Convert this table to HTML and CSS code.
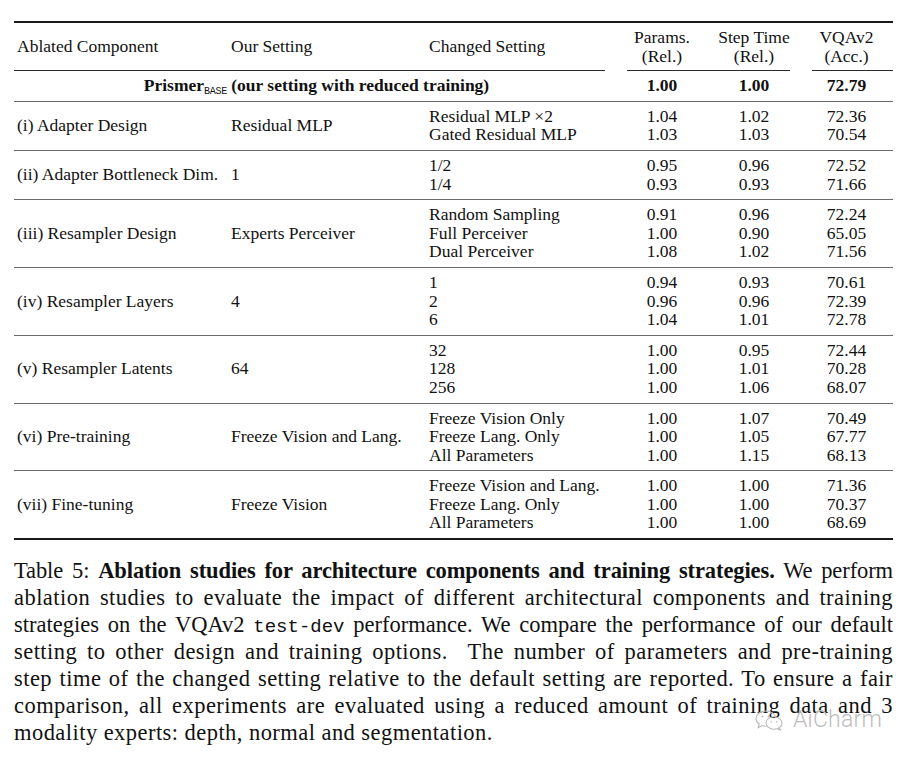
FILE: index.html
```html
<!DOCTYPE html>
<html lang="en">
<head>
<meta charset="utf-8">
<title>Table 5: Ablation studies</title>
<link rel="stylesheet" href="styles.css">
</head>
<body>
<div class="page">
  <table class="ablation">
    <colgroup>
      <col class="c1"><col class="c2"><col class="c3"><col class="c4"><col class="c5"><col class="c6">
    </colgroup>
    <thead>
      <tr class="head">
        <th>Ablated Component</th>
        <th>Our Setting</th>
        <th>Changed Setting</th>
        <th class="num">Params.<br>(Rel.)</th>
        <th class="num">Step Time<br>(Rel.)</th>
        <th class="num">VQAv2<br>(Acc.)</th>
      </tr>
      <tr class="cmid">
        <td colspan="3"><div class="rule rule-r"></div></td>
        <td colspan="2"><div class="rule rule-lr"></div></td>
        <td><div class="rule rule-l"></div></td>
      </tr>
    </thead>
    <tbody>
      <tr class="base">
        <td colspan="3" class="center">Prismer<sub class="sub">BASE</sub> (our setting with reduced training)</td>
        <td class="num">1.00</td>
        <td class="num">1.00</td>
        <td class="num">72.79</td>
      </tr>
      <tr class="group">
        <td>(i) Adapter Design</td>
        <td>Residual MLP</td>
        <td>Residual MLP ×2<br>Gated Residual MLP</td>
        <td class="num">1.04<br>1.03</td>
        <td class="num">1.02<br>1.03</td>
        <td class="num">72.36<br>70.54</td>
      </tr>
      <tr class="group">
        <td>(ii) Adapter Bottleneck Dim.</td>
        <td>1</td>
        <td>1/2<br>1/4</td>
        <td class="num">0.95<br>0.93</td>
        <td class="num">0.96<br>0.93</td>
        <td class="num">72.52<br>71.66</td>
      </tr>
      <tr class="group">
        <td>(iii) Resampler Design</td>
        <td>Experts Perceiver</td>
        <td>Random Sampling<br>Full Perceiver<br>Dual Perceiver</td>
        <td class="num">0.91<br>1.00<br>1.08</td>
        <td class="num">0.96<br>0.90<br>1.02</td>
        <td class="num">72.24<br>65.05<br>71.56</td>
      </tr>
      <tr class="group">
        <td>(iv) Resampler Layers</td>
        <td>4</td>
        <td>1<br>2<br>6</td>
        <td class="num">0.94<br>0.96<br>1.04</td>
        <td class="num">0.93<br>0.96<br>1.01</td>
        <td class="num">70.61<br>72.39<br>72.78</td>
      </tr>
      <tr class="group">
        <td>(v) Resampler Latents</td>
        <td>64</td>
        <td>32<br>128<br>256</td>
        <td class="num">1.00<br>1.00<br>1.00</td>
        <td class="num">0.95<br>1.01<br>1.06</td>
        <td class="num">72.44<br>70.28<br>68.07</td>
      </tr>
      <tr class="group">
        <td>(vi) Pre-training</td>
        <td>Freeze Vision and Lang.</td>
        <td>Freeze Vision Only<br>Freeze Lang. Only<br>All Parameters</td>
        <td class="num">1.00<br>1.00<br>1.00</td>
        <td class="num">1.07<br>1.05<br>1.15</td>
        <td class="num">70.49<br>67.77<br>68.13</td>
      </tr>
      <tr class="group">
        <td>(vii) Fine-tuning</td>
        <td>Freeze Vision</td>
        <td>Freeze Vision and Lang.<br>Freeze Lang. Only<br>All Parameters</td>
        <td class="num">1.00<br>1.00<br>1.00</td>
        <td class="num">1.00<br>1.00<br>1.00</td>
        <td class="num">71.36<br>70.37<br>68.69</td>
      </tr>
    </tbody>
  </table>

  <p class="caption">
    <span class="line first">Table 5: <b>Ablation studies for architecture components and training strategies.</b> We perform</span>
    <span class="line">ablation studies to evaluate the impact of different architectural components and training</span>
    <span class="line third">strategies on the VQAv2 <code class="tt">test-dev</code> performance. We compare the performance of our default</span>
    <span class="line">setting to other design and training options. &nbsp;The number of parameters and pre-training</span>
    <span class="line">step time of the changed setting relative to the default setting are reported. To ensure a fair</span>
    <span class="line">comparison, all experiments are evaluated using a reduced amount of training data and 3</span>
    <span class="line last">modality experts: depth, normal and segmentation.</span>
  </p>

  <div class="watermark">
    <svg class="wm-icon" width="32" height="22" viewBox="0 0 32 22">
      <path d="M12 2 C6 2 2 5.5 2 9.5 C2 11.8 3.3 13.8 5.3 15.2 L4.2 18.6 L8.2 16.6 C9.4 17 10.7 17.2 12 17.2" fill="none" stroke="#b9b9b9" stroke-width="1.1"/>
      <path d="M12 2 C17.5 2 21.6 5.2 21.9 9" fill="none" stroke="#b9b9b9" stroke-width="1.1"/>
      <ellipse cx="20" cy="14" rx="8" ry="6.2" fill="none" stroke="#b9b9b9" stroke-width="1.1"/>
      <path d="M25 18.8 L27 21.2 L23.4 19.8" fill="none" stroke="#b9b9b9" stroke-width="1.1"/>
      <circle cx="8.5" cy="7.5" r="0.9" fill="#b9b9b9"/>
      <circle cx="14.5" cy="7.5" r="0.9" fill="#b9b9b9"/>
      <circle cx="17.3" cy="12.8" r="0.8" fill="#b9b9b9"/>
      <circle cx="22.7" cy="12.8" r="0.8" fill="#b9b9b9"/>
    </svg>
    <span class="wm-text">AiCharm</span>
  </div>
</div>
</body>
</html>
```

FILE: styles.css
```css
html, body {
  margin: 0;
  padding: 0;
  background: #ffffff;
}

.page {
  position: relative;
  width: 879px;
  padding: 21px 16px 0 14px;
  color: #111111;
  font-family: "Liberation Serif", "Times New Roman", serif;
}

.ablation {
  width: 879px;
  table-layout: fixed;
  border-collapse: separate;
  border-spacing: 0;
  border-top: 2px solid #1a1a1a;
  border-bottom: 2px solid #1a1a1a;
  font-size: 17.5px;
  line-height: 18.6px;
}

.c1 { width: 214px; }
.c2 { width: 198px; }
.c3 { width: 190px; }
.c4 { width: 92px; }
.c5 { width: 92px; }
.c6 { width: 93px; }

.ablation th,
.ablation td {
  padding: 0 0 0 3px;
  text-align: left;
  vertical-align: middle;
  font-weight: normal;
  white-space: nowrap;
}

.ablation .num {
  text-align: center;
  padding-left: 0;
}

.ablation .center {
  text-align: center;
}

.head th {
  padding-top: 5px;
  padding-bottom: 5px;
}

.cmid td {
  padding: 0;
  height: 1px;
  line-height: 0;
  font-size: 0;
}

.rule {
  height: 1px;
  background: #2a2a2a;
}

.rule-r { margin-right: 11px; }
.rule-lr { margin-left: 11px; margin-right: 10px; }
.rule-l { margin-left: 12px; }

.base td {
  padding-top: 5px;
  padding-bottom: 6px;
  font-weight: bold;
}

.sub {
  font-family: "Liberation Mono", monospace;
  font-weight: normal;
  font-size: 10px;
  vertical-align: -3px;
  line-height: 0;
  letter-spacing: -0.3px;
}

.group td {
  border-top: 1px solid #6a6a6a;
  padding-top: 5px;
  padding-bottom: 6px;
}

.caption {
  margin: 17px 0 0 0;
  font-size: 22.5px;
  line-height: 27px;
  letter-spacing: 0.45px;
  color: #111111;
}

.caption .line {
  display: block;
  text-align: justify;
  text-align-last: justify;
  white-space: normal;
}

.caption .line.first {
  letter-spacing: -0.1px;
}

.caption .line.third {
  letter-spacing: 0;
}

.caption .line.last {
  text-align: left;
  text-align-last: left;
}

.caption b {
  font-weight: bold;
}

.tt {
  font-family: "Liberation Mono", "DejaVu Sans Mono", monospace;
  font-size: 19px;
  line-height: 0;
  letter-spacing: 0;
}

.watermark {
  position: absolute;
  left: 754px;
  top: 708px;
  display: flex;
  align-items: center;
  gap: 7px;
}

.wm-icon {
  display: block;
}

.wm-text {
  font-family: Roboto, "Open Sans", sans-serif;
  font-weight: 300;
  font-size: 23px;
  line-height: 24px;
  color: #bdbdbd;
  letter-spacing: 0.2px;
}
```
